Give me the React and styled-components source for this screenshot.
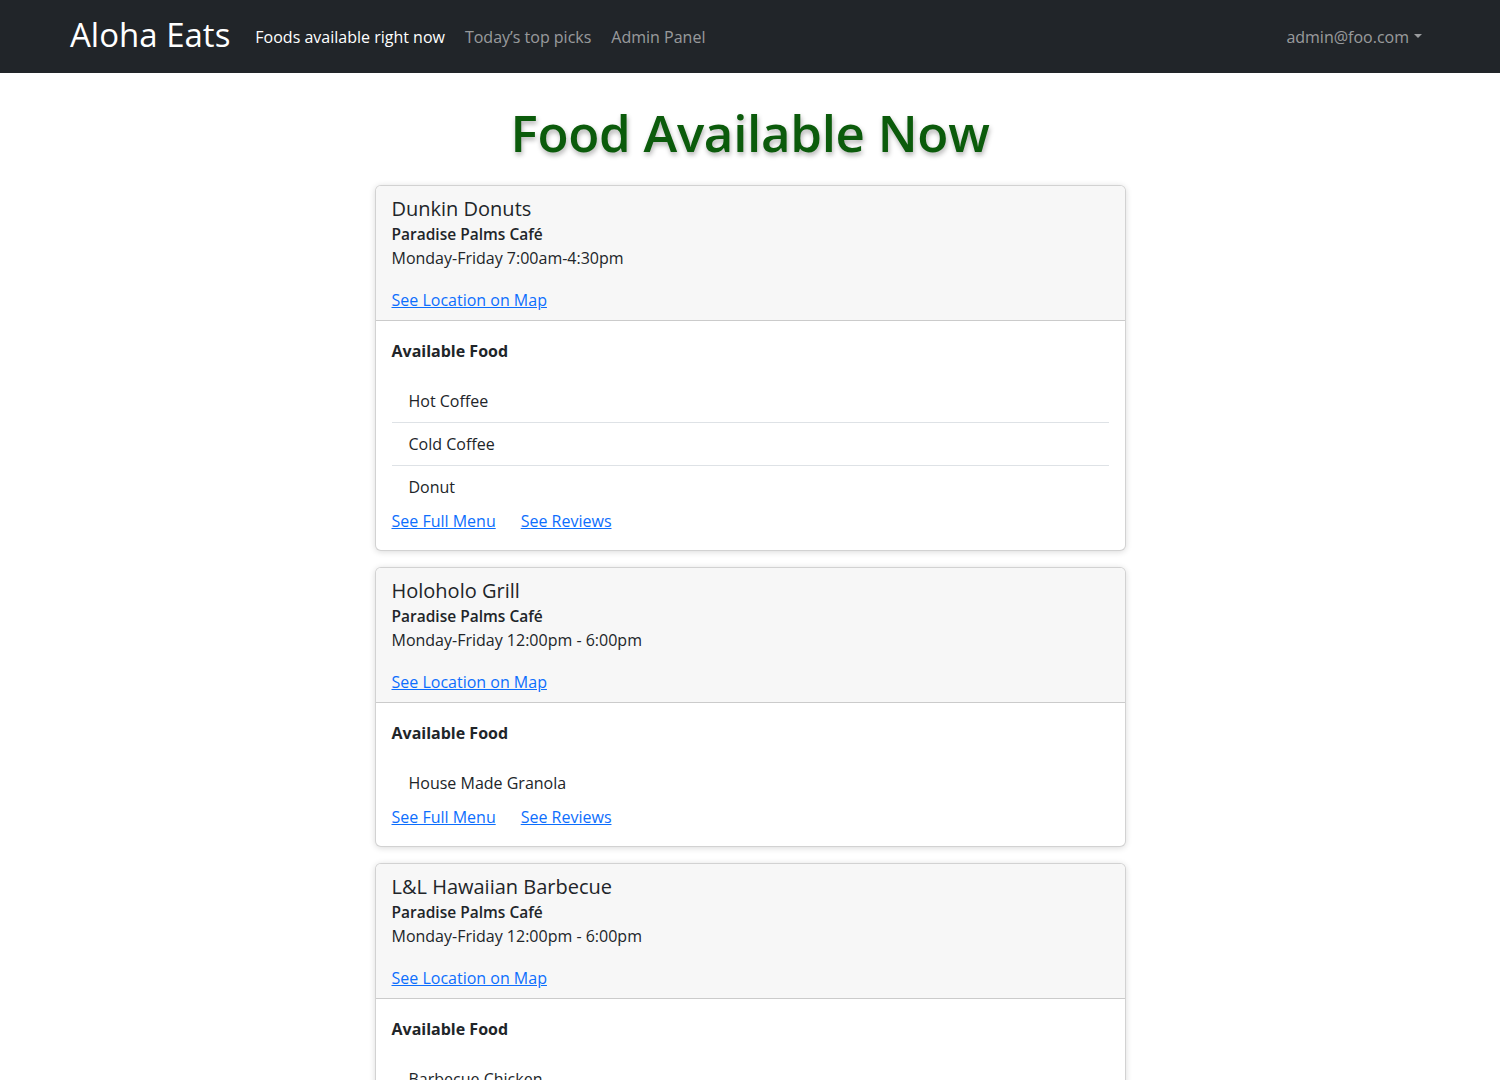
import React from "react";
import styled, { createGlobalStyle } from "styled-components";

const GlobalStyle = createGlobalStyle`
  body {
    margin: 0;
    font-family: "Open Sans", "Noto Sans", sans-serif;
    font-size: 16px;
    line-height: 1.5;
    color: #212529;
    background: #fff;
  }
  * { box-sizing: border-box; }
`;

const NavBar = styled.nav`
  height: 73px;
  background: #212529;
  display: flex;
  align-items: center;
  padding: 0 78px 0 70px;
`;

const Brand = styled.a`
  font-size: 33px;
  font-weight: 500;
  color: #fff;
  margin-right: 15px;
  text-decoration: none;
  line-height: 1.2;
  margin-top: -3px;
`;

const NavLink = styled.a`
  padding: 0 10px;
  font-size: 16px;
  color: ${(p) => (p.$active ? "#fff" : "rgba(255,255,255,0.55)")};
  text-decoration: none;
`;

const Spacer = styled.div`
  flex: 1;
`;

const UserMenu = styled.a`
  display: flex;
  align-items: center;
  gap: 5px;
  color: rgba(255, 255, 255, 0.55);
  text-decoration: none;
  &::after {
    content: "";
    border-top: 4.5px solid rgba(255, 255, 255, 0.55);
    border-left: 4px solid transparent;
    border-right: 4px solid transparent;
    margin-top: -2px;
  }
`;

const Main = styled.main`
  display: flex;
  flex-direction: column;
  align-items: center;
  padding-top: 26px;
`;

const Title = styled.h1`
  margin: 0 0 20px;
  font-size: 51px;
  font-weight: 600;
  line-height: 1.3;
  letter-spacing: -0.3px;
  color: #0b5b0b;
  text-shadow: 1px 3px 5px rgba(0, 0, 0, 0.3);
`;

const Card = styled.section`
  width: 751px;
  border: 1px solid rgba(0, 0, 0, 0.175);
  border-radius: 6px;
  box-shadow: 0 1px 6px rgba(0, 0, 0, 0.15);
  margin-bottom: 16px;
  overflow: hidden;
  background: #fff;
`;

const CardHeader = styled.header`
  background: #f7f7f7;
  padding: 11px 16px 8px;
  border-bottom: 1px solid rgba(0, 0, 0, 0.175);
`;

const Name = styled.h5`
  margin: 0 0 1px;
  font-size: 20px;
  font-weight: 500;
  line-height: 24px;
`;

const Place = styled.h6`
  margin: 0;
  font-size: 15.5px;
  font-weight: 600;
  line-height: 24px;
`;

const Hours = styled.p`
  margin: 0 0 18px;
  line-height: 24px;
`;

const Link = styled.a`
  color: #0d6efd;
  text-decoration: underline;
`;

const CardBody = styled.div`
  padding: 18px 16px 17px;
`;

const Subhead = styled.h6`
  margin: 0 0 17px;
  font-size: 16px;
  font-weight: 700;
  line-height: 24px;
`;

const FoodList = styled.ul`
  list-style: none;
  margin: 0;
  padding: 0;
`;

const FoodItem = styled.li`
  padding: 9px 17px;
  line-height: 24px;
  border-bottom: 1px solid #dee2e6;
  &:last-child {
    border-bottom: none;
    padding-bottom: 10px;
  }
`;

const LinkRow = styled.div`
  display: flex;
  gap: 25px;
  line-height: 24px;
`;

const vendors = [
  {
    name: "Dunkin Donuts",
    hours: "Monday-Friday 7:00am-4:30pm",
    foods: ["Hot Coffee", "Cold Coffee", "Donut"],
  },
  {
    name: "Holoholo Grill",
    hours: "Monday-Friday 12:00pm - 6:00pm",
    foods: ["House Made Granola"],
  },
  {
    name: "L&L Hawaiian Barbecue",
    hours: "Monday-Friday 12:00pm - 6:00pm",
    foods: ["Barbecue Chicken"],
  },
];

function VendorCard({ vendor }) {
  return (
    <Card>
      <CardHeader>
        <Name>{vendor.name}</Name>
        <Place>Paradise Palms Café</Place>
        <Hours>{vendor.hours}</Hours>
        <Link href="#">See Location on Map</Link>
      </CardHeader>
      <CardBody>
        <Subhead>Available Food</Subhead>
        <FoodList>
          {vendor.foods.map((f) => (
            <FoodItem key={f}>{f}</FoodItem>
          ))}
        </FoodList>
        <LinkRow>
          <Link href="#">See Full Menu</Link>
          <Link href="#">See Reviews</Link>
        </LinkRow>
      </CardBody>
    </Card>
  );
}

export default function App() {
  return (
    <>
      <GlobalStyle />
      <NavBar>
        <Brand href="#">Aloha Eats</Brand>
        <NavLink href="#" $active>
          Foods available right now
        </NavLink>
        <NavLink href="#">Today’s top picks</NavLink>
        <NavLink href="#">Admin Panel</NavLink>
        <Spacer />
        <UserMenu href="#">admin@foo.com</UserMenu>
      </NavBar>
      <Main>
        <Title>Food Available Now</Title>
        {vendors.map((v) => (
          <VendorCard key={v.name} vendor={v} />
        ))}
      </Main>
    </>
  );
}
